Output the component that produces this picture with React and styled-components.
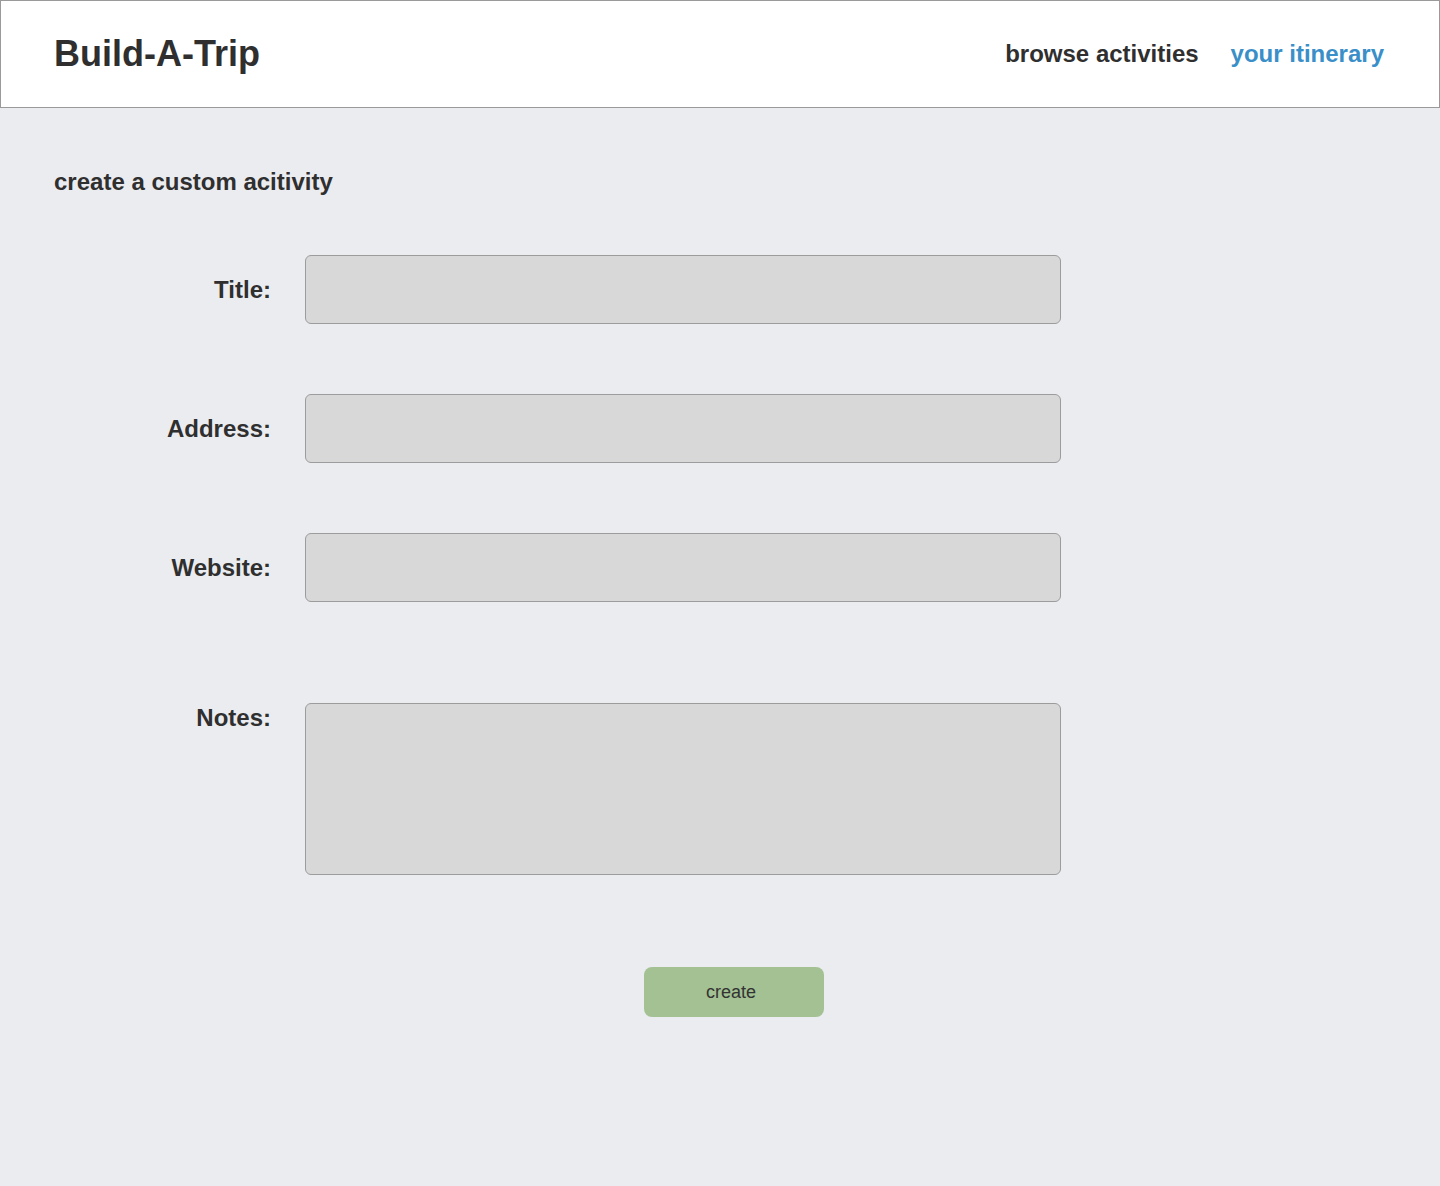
import React from 'react';
import styled, { createGlobalStyle } from 'styled-components';

const GlobalStyle = createGlobalStyle`
  * { box-sizing: border-box; }
  html, body {
    margin: 0;
    padding: 0;
    background: #ebecf0;
    font-family: "Liberation Sans", Arial, Helvetica, sans-serif;
    color: #333;
  }
`;

const fields = [
  { label: 'Title:', gap: 59 },
  { label: 'Address:', gap: 70 },
  { label: 'Website:', gap: 70 },
  { label: 'Notes:', gap: 101, multi: true },
];

const App = () => (
  <Page>
    <GlobalStyle />
    <Header>
      <Logo>Build-A-Trip</Logo>
      <Nav>
        <NavLink href="#">browse activities</NavLink>
        <NavLink href="#" $active>your itinerary</NavLink>
      </Nav>
    </Header>
    <Main>
      <Heading>create a custom acitivity</Heading>
      {fields.map((f) => (
        <Row key={f.label} $gap={f.gap} $top={f.multi}>
          <Label $top={f.multi}>{f.label}</Label>
          {f.multi ? <TextArea /> : <Input type="text" />}
        </Row>
      ))}
      <ButtonRow>
        <CreateButton>create</CreateButton>
      </ButtonRow>
    </Main>
  </Page>
);

export default App;

const Page = styled.div`
  min-height: 1186px;
  background: #ebecf0;
`;

const Header = styled.header`
  height: 108px;
  background: #fff;
  border: 1px solid #9a9a9a;
  display: flex;
  align-items: center;
  justify-content: space-between;
  padding: 0 55px 0 53px;
`;

const Logo = styled.h1`
  margin: 0;
  font-size: 36px;
  font-weight: bold;
  color: #2f2f2f;
`;

const Nav = styled.nav`
  display: flex;
  gap: 32px;
`;

const NavLink = styled.a`
  font-size: 24px;
  font-weight: bold;
  text-decoration: none;
  color: ${(p) => (p.$active ? '#3a8fc8' : '#2f2f2f')};
`;

const Main = styled.main`
  padding: 60px 54px 0;
`;

const Heading = styled.h2`
  margin: 0;
  font-size: 24px;
  line-height: 28px;
  font-weight: bold;
  color: #2f2f2f;
`;

const Row = styled.div`
  display: flex;
  align-items: ${(p) => (p.$top ? 'flex-start' : 'center')};
  gap: 34px;
  margin-top: ${(p) => p.$gap}px;
`;

const Label = styled.label`
  width: 217px;
  text-align: right;
  font-size: 24px;
  font-weight: bold;
  color: #2f2f2f;
  padding-top: ${(p) => (p.$top ? '1px' : '0')};
`;

const fieldBox = `
  width: 756px;
  background: #d8d8d8;
  border: 1px solid #9c9c9c;
  border-radius: 6px;
  font-family: inherit;
  font-size: 18px;
  padding: 8px 12px;
  outline: none;
`;

const Input = styled.input`
  ${fieldBox}
  height: 69px;
`;

const TextArea = styled.textarea`
  ${fieldBox}
  height: 172px;
  resize: none;
  display: block;
`;

const ButtonRow = styled.div`
  margin-top: 92px;
  padding-left: 590px;
`;

const CreateButton = styled.button`
  width: 180px;
  height: 50px;
  border: none;
  border-radius: 8px;
  background: #a3c192;
  color: #333;
  font-family: inherit;
  font-size: 18px;
  padding: 0 6px 0 0;
  cursor: pointer;
`;
